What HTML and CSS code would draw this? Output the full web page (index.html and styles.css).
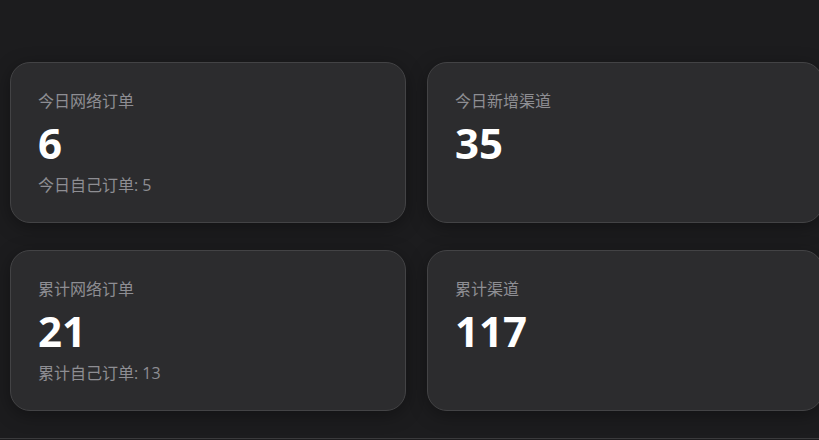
FILE: index.html
```html
<!DOCTYPE html>
<html lang="zh-CN">
<head>
<meta charset="utf-8">
<title>统计</title>
<link rel="stylesheet" href="styles.css">
</head>
<body>
<main class="page">
  <section class="stats">
    <div class="card">
      <div class="label">今日网络订单</div>
      <div class="value">6</div>
      <div class="sub">今日自己订单: 5</div>
    </div>
    <div class="card">
      <div class="label">今日新增渠道</div>
      <div class="value">35</div>
    </div>
    <div class="card">
      <div class="label">累计网络订单</div>
      <div class="value">21</div>
      <div class="sub">累计自己订单: 13</div>
    </div>
    <div class="card">
      <div class="label">累计渠道</div>
      <div class="value">117</div>
    </div>
  </section>
  <div class="divider"></div>
</main>
</body>
</html>
```

FILE: styles.css
```css
html, body {
  margin: 0;
  padding: 0;
  background: #1c1c1e;
  overflow: hidden;
  height: 440px;
}
body {
  font-family: "Open Sans", "Noto Sans CJK SC", sans-serif;
}
.page {
  padding: 62px 0 0 10px;
  width: 830px;
}
.stats {
  display: grid;
  grid-template-columns: 396px 396px;
  column-gap: 21px;
  row-gap: 27px;
}
.card {
  box-sizing: border-box;
  height: 161px;
  background: #2c2c2e;
  border: 1px solid #434345;
  border-radius: 20px;
  padding: 26px 27px 0;
  box-shadow: 0 4px 18px rgba(0, 0, 0, 0.35);
}
.label,
.sub {
  font-size: 16px;
  line-height: 24px;
  color: #8e8e93;
}
.value {
  font-size: 42px;
  font-weight: 700;
  line-height: 60px;
  color: #ffffff;
}
.divider {
  margin-top: 27px;
  margin-left: -10px;
  height: 1px;
  background: #3a3a3c;
}
```
